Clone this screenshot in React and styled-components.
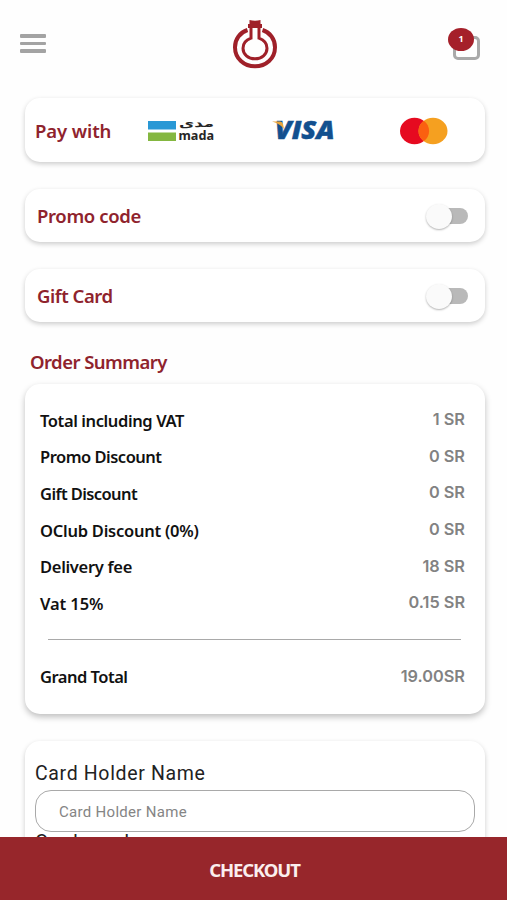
import React, { useState } from "react";
import styled, { createGlobalStyle } from "styled-components";

const colors = {
  primary: "#97262b",
  title: "#8f232d",
  grey: "#828282",
  line: "#a9a9a9",
};

const GlobalStyle = createGlobalStyle`
  * {
    box-sizing: border-box;
  }

  body {
    margin: 0;
    background-color: #fefefe;
    font-family: "Noto Sans", "Open Sans", sans-serif;
  }
`;

const Page = styled.div`
  display: flex;
  flex-direction: column;
  width: 507px;
  height: 900px;
  overflow: hidden;
`;

const Header = styled.header`
  display: grid;
  flex: none;
  grid-template-columns: 1fr auto 1fr;
  align-items: start;
  height: 88px;
  padding: 20px 27px 0 30px;
`;

const MenuButton = styled.div`
  display: flex;
  flex-direction: column;
  gap: 4px;
  width: 26px;
  margin-top: 14px;
  margin-left: -10px;
  cursor: pointer;
`;

const MenuLine = styled.span`
  height: 3.6px;
  border-radius: 1px;
  background-color: #a3a3a3;
`;

const Cart = styled.div`
  position: relative;
  justify-self: end;
  width: 27px;
  height: 32px;
  margin-top: 8px;
  padding-top: 8px;
`;

const Bag = styled.div`
  height: 24px;
  border: 3px solid #a9a9a9;
  border-radius: 5px;
`;

const CartBadge = styled.span`
  position: absolute;
  top: 0;
  left: -5px;
  width: 26px;
  height: 23px;
  border-radius: 50%;
  background-color: #a5202a;
  color: #fff;
  font-size: 9px;
  font-weight: bold;
  line-height: 22px;
  text-align: center;
`;

const Content = styled.main`
  flex: 1;
  min-height: 0;
  padding: 10px 22px 0 25px;
  overflow: hidden;
`;

const Card = styled.section`
  border-radius: 15px;
  background-color: #fff;
  box-shadow: 0 2px 5px rgba(0, 0, 0, 0.2);
`;

const PayCard = styled(Card)`
  display: flex;
  align-items: center;
  height: 64px;
  padding: 1px 37px 0 10px;
`;

const Title = styled.h2`
  margin: 0;
  color: ${colors.title};
  font-size: 18.5px;
  font-weight: 600;
  line-height: 24px;
  letter-spacing: ${(props) => props.$spacing || "0"};
  white-space: nowrap;
`;

const Brands = styled.div`
  display: flex;
  flex: 1;
  justify-content: space-between;
  align-items: center;
  margin-left: 37px;
`;

const ToggleCard = styled(Card)`
  display: flex;
  justify-content: space-between;
  align-items: center;
  height: 53px;
  margin-top: 27px;
  padding: 1px 17px 0 12px;
`;

const Track = styled.div`
  display: flex;
  align-items: center;
  justify-content: ${(props) => (props.$on ? "flex-end" : "flex-start")};
  width: 38px;
  height: 16px;
  border-radius: 8px;
  background-color: ${(props) => (props.$on ? "#d59a9d" : "#b9b9b9")};
  cursor: pointer;
`;

const Thumb = styled.span`
  flex: none;
  width: 26px;
  height: 25px;
  margin-left: -4px;
  border-radius: 50%;
  background-color: #fafafa;
  box-shadow: 0 1px 2px rgba(0, 0, 0, 0.3);
`;

const SummaryHeading = styled.div`
  height: 62px;
  padding: 28px 0 0 5px;
`;

const SummaryCard = styled(Card)`
  height: 330px;
  padding: 18.5px 20px 0 15px;
  box-shadow: 0 3px 6px rgba(0, 0, 0, 0.25);
`;

const Row = styled.div`
  display: flex;
  justify-content: space-between;
  align-items: center;
  height: 36.6px;
`;

const RowLabel = styled.span`
  margin-top: -1px;
  color: #111;
  font-size: 16.5px;
  font-weight: 600;
  letter-spacing: ${(props) => props.$spacing || "-0.4px"};
`;

const RowValue = styled.span`
  margin-top: -3px;
  color: ${colors.grey};
  font-family: Inter, "Liberation Sans", sans-serif;
  font-size: 16.3px;
  font-weight: 600;
`;

const Divider = styled.hr`
  height: 1px;
  margin: 17px 4px 19px 8px;
  border: none;
  background-color: ${colors.line};
`;

const FormCard = styled(Card)`
  height: 160px;
  margin-top: 27px;
  padding: 19px 10px 0;
`;

const FieldLabel = styled.label`
  display: block;
  height: 30px;
  color: #222;
  font-family: Roboto, sans-serif;
  font-size: 19.5px;
  line-height: 27px;
  letter-spacing: 0.65px;

  input + & {
    margin-top: -3px;
  }
`;

const Input = styled.input`
  display: block;
  width: 100%;
  height: 42px;
  padding: 2px 23px 0;
  border: 1px solid ${colors.line};
  border-radius: 16px;
  outline: none;
  background-color: #fff;
  font-family: Roboto, sans-serif;
  font-size: 15px;
  letter-spacing: 0.3px;

  &::placeholder {
    color: #858585;
    opacity: 1;
  }
`;

const CheckoutButton = styled.button`
  flex: none;
  height: 63px;
  padding: 2px 0 0 2px;
  border: none;
  background-color: ${colors.primary};
  color: #fbeeee;
  font-family: "Noto Sans", sans-serif;
  font-size: 18.5px;
  font-weight: 700;
  letter-spacing: -1.1px;
  cursor: pointer;
`;

const FlaskLogo = () => (
  <svg width="46" height="50" viewBox="0 0 46 50">
    <g fill="none" stroke="#9f2029" strokeWidth="4">
      <path d="M15.5 10C8 12.5 3 19 3 27.2C3 38.5 12 46.3 23 46.3S43 38.5 43 27.2C43 19 38 12.5 30.5 10" />
      <path
        d="M19 8V18.2C14 20 11 23.5 11 28.2C11 34.3 16.2 38.8 23 38.8S35 34.3 35 28.2C35 23.5 32 20 27 18.2V8"
        strokeWidth="3"
      />
    </g>
    <path fill="#9f2029" d="M17.5 0Q23 1.5 28.5 0V4H30V8H16V4H17.5Z" />
  </svg>
);

const MadaLogo = () => (
  <svg width="67" height="26" viewBox="0 0 67 26">
    <rect y="3" width="28" height="8.5" fill="#2998d5" />
    <rect y="14.5" width="28" height="8.5" fill="#84b740" />
    <g fill="#262626" fontWeight="bold">
      <text x="31" y="9" fontFamily="DejaVu Sans" fontSize="10.5" textLength="35" lengthAdjust="spacingAndGlyphs">
        مدى
      </text>
      <text x="30.5" y="22" fontFamily="Noto Sans" fontSize="12.5" textLength="35.5" lengthAdjust="spacingAndGlyphs">
        mada
      </text>
    </g>
  </svg>
);

const VisaLogo = () => (
  <svg width="72" height="30" viewBox="0 0 72 30">
    <text
      x="3"
      y="23"
      fill="#12508f"
      stroke="#12508f"
      strokeWidth="0.5"
      fontFamily="Open Sans"
      fontSize="24"
      fontStyle="italic"
      fontWeight="800"
      textLength="59.5"
      lengthAdjust="spacingAndGlyphs"
    >
      VISA
    </text>
    <path fill="#e9a53b" d="M0 5.5H8Q10.5 5.5 11 8L12 13Q8 7.5 0 5.5Z" />
  </svg>
);

const MastercardLogo = () => (
  <svg width="48" height="28" viewBox="0 0 48 28">
    <ellipse cx="14.5" cy="14" rx="14.5" ry="13.2" fill="#e60a20" />
    <ellipse cx="33" cy="14" rx="14.5" ry="13.2" fill="#f5a020" />
    <path fill="#fb6010" d="M23.8 3.8A14.5 13.2 0 0 1 23.8 24.2A14.5 13.2 0 0 1 23.8 3.8Z" />
  </svg>
);

const rows = [
  { label: "Total including VAT", value: "1 SR", spacing: "-0.4px" },
  { label: "Promo Discount", value: "0 SR", spacing: "-0.5px" },
  { label: "Gift Discount", value: "0 SR", spacing: "-0.6px" },
  { label: "OClub Discount (0%)", value: "0 SR", spacing: "-0.25px" },
  { label: "Delivery fee", value: "18 SR", spacing: "-0.3px" },
  { label: "Vat 15%", value: "0.15 SR", spacing: "-0.1px" },
];

const Toggle = () => {
  const [on, setOn] = useState(false);

  return (
    <Track $on={on} onClick={() => setOn(!on)}>
      <Thumb />
    </Track>
  );
};

const App = () => {
  return (
    <Page>
      <GlobalStyle />
      <Header>
        <MenuButton>
          <MenuLine />
          <MenuLine />
          <MenuLine />
        </MenuButton>
        <FlaskLogo />
        <Cart>
          <Bag />
          <CartBadge>1</CartBadge>
        </Cart>
      </Header>
      <Content>
        <PayCard>
          <Title $spacing="-0.1px">Pay with</Title>
          <Brands>
            <MadaLogo />
            <VisaLogo />
            <MastercardLogo />
          </Brands>
        </PayCard>
        <ToggleCard>
          <Title $spacing="-0.35px">Promo code</Title>
          <Toggle />
        </ToggleCard>
        <ToggleCard>
          <Title $spacing="-0.45px">Gift Card</Title>
          <Toggle />
        </ToggleCard>
        <SummaryHeading>
          <Title $spacing="-0.55px">Order Summary</Title>
        </SummaryHeading>
        <SummaryCard>
          {rows.map((row) => (
            <Row key={row.label}>
              <RowLabel $spacing={row.spacing}>{row.label}</RowLabel>
              <RowValue>{row.value}</RowValue>
            </Row>
          ))}
          <Divider />
          <Row>
            <RowLabel $spacing="-0.5px">Grand Total</RowLabel>
            <RowValue>19.00SR</RowValue>
          </Row>
        </SummaryCard>
        <FormCard>
          <FieldLabel htmlFor="holder">Card Holder Name</FieldLabel>
          <Input id="holder" placeholder="Card Holder Name" />
          <FieldLabel htmlFor="number">Card number</FieldLabel>
          <Input id="number" placeholder="Card number" />
        </FormCard>
      </Content>
      <CheckoutButton>CHECKOUT</CheckoutButton>
    </Page>
  );
};

export default App;
